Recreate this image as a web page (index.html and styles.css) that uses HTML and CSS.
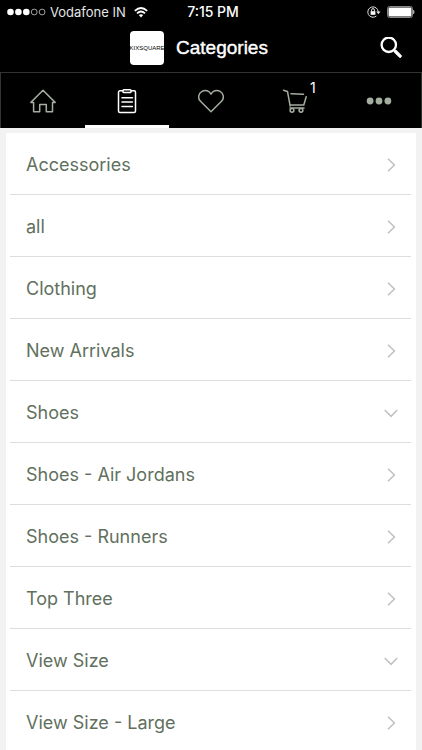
FILE: index.html
```html
<!DOCTYPE html>
<html lang="en">
<head>
<meta charset="utf-8">
<meta name="viewport" content="width=device-width, initial-scale=1">
<title>Categories</title>
<link rel="stylesheet" href="styles.css">
</head>
<body>
<div class="app">
  <div class="status">
    <div class="status-side">
      <svg width="39" height="8" viewBox="0 0 39 8" aria-hidden="true"><g fill="#fff"><circle cx="3.5" cy="4" r="3.3"/><circle cx="11.4" cy="4" r="3.3"/><circle cx="19.3" cy="4" r="3.3"/></g><g fill="none" stroke="#c4c8c4" stroke-width=".8"><circle cx="27.2" cy="4" r="2.9"/><circle cx="35.1" cy="4" r="2.9"/></g></svg>
      <span class="carrier">Vodafone IN</span>
      <svg class="wifi" width="14" height="11" viewBox="0 0 14 11" aria-hidden="true"><g fill="none" stroke="#fff" stroke-width="1.7"><path d="M.8 3.8Q7-1.8 13.2 3.8"/><path d="M3 6.3Q7 2.7 11 6.3"/></g><path d="M4.8 8.1Q7 6.3 9.2 8.1L7 10.5Z" fill="#fff"/></svg>
    </div>
    <span class="time">7:15 PM</span>
    <div class="status-side status-end">
      <svg width="14" height="12" viewBox="0 0 14 12" aria-hidden="true"><path d="M11.2 6A5.2 5.2 0 1 0 9.4 10" fill="none" stroke="#ddd"/><path d="M9.2 5.6h4.4l-2.2 2.6z" fill="#ddd"/><rect x="3.6" y="5.2" width="4.8" height="3.6" fill="#fff"/><path d="M4.6 5.4V4a1.4 1.4 0 0 1 2.8 0v1.4" fill="none" stroke="#fff" stroke-width=".9"/></svg>
      <svg width="28" height="12" viewBox="0 0 28 12" aria-hidden="true"><rect x=".5" y=".5" width="25" height="11" rx="2" fill="none" stroke="#858985"/><rect x="1.5" y="1.5" width="23" height="9" rx="1" fill="#fff"/><path d="M26.5 4q1.5 2 0 4z" fill="#fff" stroke="#ccc" stroke-width=".5"/></svg>
    </div>
  </div>
  <header class="header">
    <div class="brand">
      <span class="logo">KIXSQUARE</span>
      <h1 class="title">Categories</h1>
    </div>
    <button class="search" type="button" aria-label="Search">
      <svg width="22" height="22" viewBox="0 0 22 22"><circle cx="8.8" cy="7.8" r="7.2" fill="none" stroke="#fff" stroke-width="2.3"/><path d="M13.8 12.8l1.6 1.6" stroke="#fff" stroke-width="2"/><path d="M15.5 14.5l4.6 4.6" stroke="#fff" stroke-width="3.4" stroke-linecap="round"/></svg>
    </button>
  </header>
  <nav class="tabs">
    <a class="tab" href="#home" aria-label="Home"><svg width="26" height="26" viewBox="0 0 26 26"><path d="M.9 14.4L13 2.2l12.1 12.2h-2.6v9.4h-6.2v-7.3H9.7v7.3H3.6v-9.4z"/></svg></a>
    <a class="tab active" href="#categories" aria-label="Categories"><svg width="26" height="26" viewBox="0 0 26 26"><rect x="4.5" y="2.8" width="17" height="21.6" rx="1.5"/><rect x="9" y="1.7" width="8" height="2.8" rx=".8" fill="#000"/><path d="M8 9.7h10.4M8 14.1h10.4M8 18.5h10.4"/></svg></a>
    <a class="tab" href="#favourites" aria-label="Favourites"><svg width="26" height="26" viewBox="0 0 26 26"><path d="M13 23.8L2.5 13.3C-.8 9.9.8 5 4 3.3c3.4-1.8 7.3-.6 9 2.8 1.7-3.4 5.6-4.6 9-2.8 3.2 1.7 4.8 6.6 1.5 10z"/></svg></a>
    <a class="tab" href="#cart" aria-label="Cart"><span class="cart"><svg width="26" height="26" viewBox="0 0 26 26"><path d="M1.5 2.3l4 1.2 2.7 14.6M9 5.8l12.5.4M24.2 8.8l-2.4 8.2H8.3M8 20h14"/><circle cx="10" cy="22.3" r="1.9"/><circle cx="19" cy="22.3" r="1.9"/></svg><span class="badge">1</span></span></a>
    <a class="tab" href="#more" aria-label="More"><svg class="more" width="26" height="26" viewBox="0 0 26 26"><circle cx="4.1" cy="13" r="3.4"/><circle cx="13" cy="13" r="3.4"/><circle cx="21.9" cy="13" r="3.4"/></svg></a>
  </nav>
  <main class="content">
    <ul class="list">
      <li><a class="row" href="#accessories">Accessories<svg width="14" height="14" viewBox="0 0 14 14"><path d="M4 .8L10.4 7 4 13.2"/></svg></a></li>
      <li><a class="row" href="#all">all<svg width="14" height="14" viewBox="0 0 14 14"><path d="M4 .8L10.4 7 4 13.2"/></svg></a></li>
      <li><a class="row" href="#clothing">Clothing<svg width="14" height="14" viewBox="0 0 14 14"><path d="M4 .8L10.4 7 4 13.2"/></svg></a></li>
      <li><a class="row" href="#new-arrivals">New Arrivals<svg width="14" height="14" viewBox="0 0 14 14"><path d="M4 .8L10.4 7 4 13.2"/></svg></a></li>
      <li><button class="row" type="button" aria-expanded="false">Shoes<svg width="14" height="14" viewBox="0 0 14 14"><path d="M.8 4L7 10.4 13.2 4"/></svg></button></li>
      <li><a class="row" href="#air-jordans">Shoes - Air Jordans<svg width="14" height="14" viewBox="0 0 14 14"><path d="M4 .8L10.4 7 4 13.2"/></svg></a></li>
      <li><a class="row" href="#runners">Shoes - Runners<svg width="14" height="14" viewBox="0 0 14 14"><path d="M4 .8L10.4 7 4 13.2"/></svg></a></li>
      <li><a class="row" href="#top-three">Top Three<svg width="14" height="14" viewBox="0 0 14 14"><path d="M4 .8L10.4 7 4 13.2"/></svg></a></li>
      <li><button class="row" type="button" aria-expanded="false">View Size<svg width="14" height="14" viewBox="0 0 14 14"><path d="M.8 4L7 10.4 13.2 4"/></svg></button></li>
      <li><a class="row" href="#large">View Size - Large<svg width="14" height="14" viewBox="0 0 14 14"><path d="M4 .8L10.4 7 4 13.2"/></svg></a></li>
    </ul>
  </main>
</div>
</body>
</html>
```
FILE: styles.css
```css
* { box-sizing: border-box; }
body {
  margin: 0;
  background: #f1f2f1;
  font-family: Inter, "Liberation Sans", sans-serif;
}
svg { display: block; flex: none; }
button {
  border: 0;
  padding: 0;
  background: none;
  font: inherit;
}
a { text-decoration: none; }
.app {
  display: flex;
  flex-direction: column;
  height: 100vh;
  overflow: hidden;
}
.status {
  display: flex;
  align-items: center;
  flex: none;
  height: 24px;
  padding: 0 7px;
  background: #000;
  color: #fff;
  font-size: 13px;
  line-height: 16px;
}
.status-side {
  display: flex;
  align-items: center;
  flex: 1;
  gap: 4px;
}
.status-end {
  justify-content: flex-end;
  gap: 6px;
}
.carrier { color: #e4e6e4; white-space: nowrap; }
.wifi { margin-left: 4px; }
.time {
  padding-left: 4px;
  font-size: 14px;
  font-weight: 500;
}
.header {
  display: flex;
  align-items: center;
  flex: none;
  height: 48px;
  padding: 0 20px 0 18px;
  background: #000;
  color: #fff;
}
.brand {
  display: flex;
  align-items: center;
  justify-content: center;
  flex: 1;
  gap: 12px;
}
.logo {
  display: flex;
  align-items: center;
  justify-content: center;
  width: 34px;
  height: 34px;
  border-radius: 4px;
  background: #fff;
  color: #000;
  font-family: "Liberation Sans Narrow", "Liberation Sans", sans-serif;
  font-size: 6px;
  font-weight: 400;
}
.title {
  margin: 0;
  font-family: "Liberation Sans", sans-serif;
  font-size: 19px;
  font-weight: 400;
  -webkit-text-stroke: 0.4px #fff;
  line-height: 24px;
}
.tabs {
  display: flex;
  flex: none;
  height: 56px;
  background: #000;
  border: 1px solid #30352f;
  border-bottom: 0;
}
.tab {
  display: flex;
  align-items: center;
  justify-content: center;
  flex: 1;
  border-bottom: 3px solid transparent;
  padding-top: 3px;
  color: #a3ada0;
}
.tab svg {
  fill: none;
  stroke: currentColor;
  stroke-width: 1.5;
  stroke-linejoin: round;
  stroke-linecap: round;
}
.tab.active {
  color: #fff;
  border-bottom-color: #fff;
}
.tab .more { fill: currentColor; stroke: none; }
.cart { position: relative; }
.badge {
  position: absolute;
  left: 28px;
  top: -8px;
  color: #fff;
  font-size: 14px;
  line-height: 16px;
}
.content {
  flex: 1;
  min-height: 0;
  overflow: hidden;
  padding: 5px 6px 0;
}
.list {
  margin: 0;
  padding: 0 5px 0 4px;
  list-style: none;
  background: #fff;
}
.row {
  display: flex;
  align-items: center;
  justify-content: space-between;
  width: 100%;
  height: 62px;
  padding: 2px 13px 0 16px;
  border-bottom: 1px solid #dcdddc;
  color: #61705d;
  font-size: 18px;
  line-height: 24px;
  text-align: left;
}
.row svg {
  fill: none;
  stroke: #c0c3bf;
  stroke-width: 1.6;
}
```
